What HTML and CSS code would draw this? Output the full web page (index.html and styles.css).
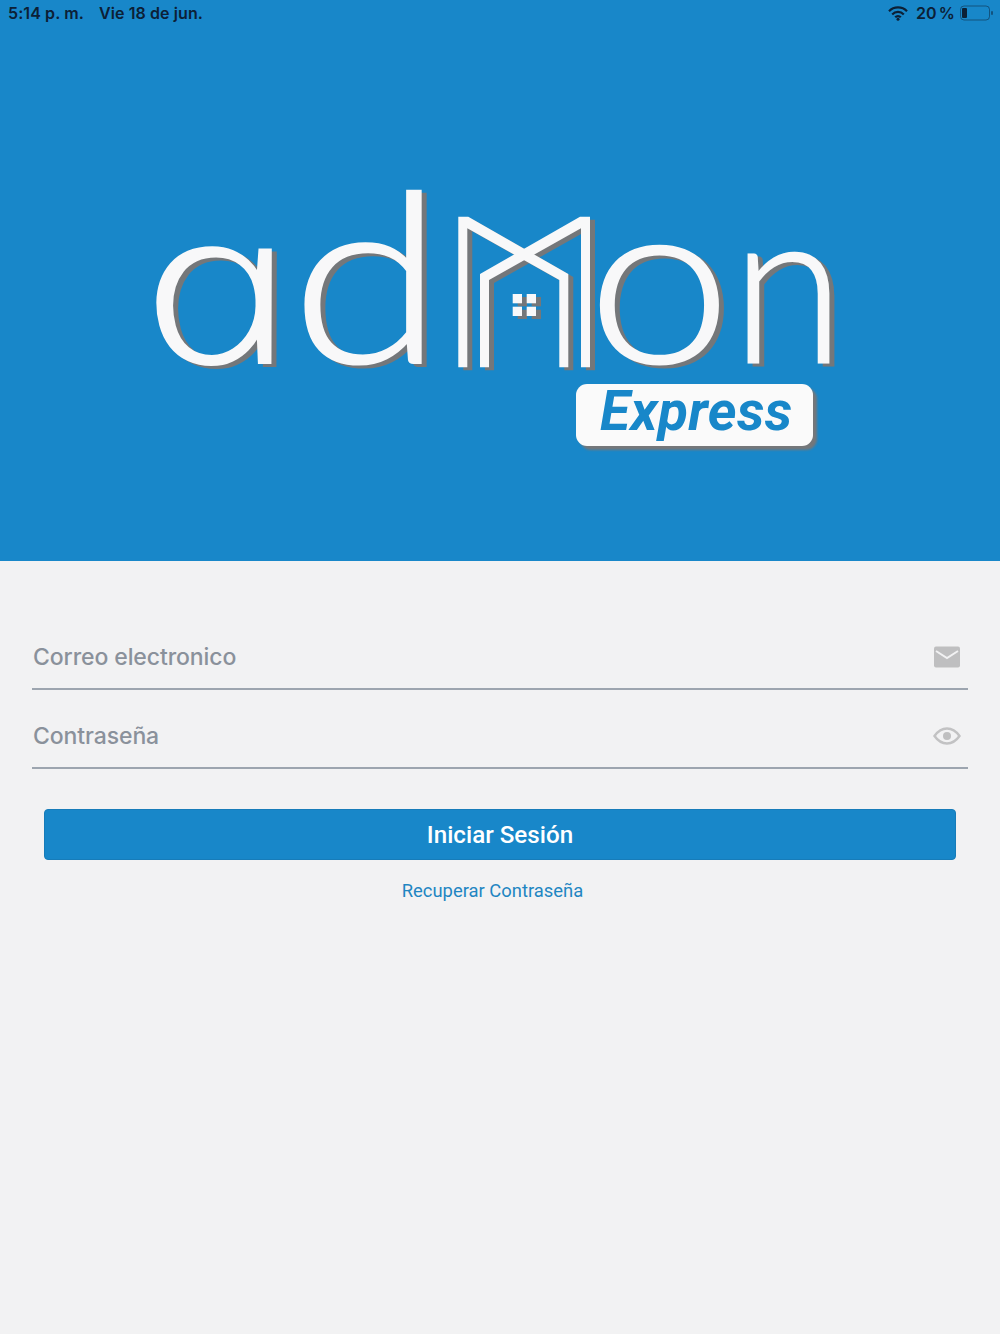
FILE: index.html
```html
<!DOCTYPE html>
<html lang="es">
<head>
  <meta charset="UTF-8">
  <meta name="viewport" content="width=device-width, initial-scale=1.0">
  <title>Admon Express</title>
  <link rel="stylesheet" href="styles.css">
</head>
<body>
  <header class="hero">
    <div class="status">
      <div class="status-left">
        <span>5:14 p. m.</span>
        <span>Vie 18 de jun.</span>
      </div>
      <div class="status-right">
        <svg class="wifi" width="20" height="15" viewBox="0 0 20 15">
          <path d="M1 5.2a12.6 12.6 0 0 1 18 0" />
          <path d="M4.2 8.4a8 8 0 0 1 11.6 0" />
          <path d="M7.2 11.3a3.8 3.8 0 0 1 5.6 0" />
          <circle cx="10" cy="13.2" r="1.5" />
        </svg>
        <span class="battery-text">20 %</span>
        <svg class="battery" width="34" height="16" viewBox="0 0 34 16">
          <rect class="battery-case" x="0.5" y="1" width="29" height="14" rx="3.5" />
          <rect class="battery-level" x="2" y="3" width="5" height="10" rx="1" />
          <rect class="battery-nub" x="31" y="6" width="2" height="4" rx="1" />
        </svg>
      </div>
    </div>

    <svg class="logo" width="1000" height="535" viewBox="0 26 1000 535" role="img" aria-label="admon Express">
      <g class="logo-mark">
        <text class="logo-letter logo-a" transform="translate(157 363) skewX(15) scale(1.28 1)">a</text>
        <text class="logo-letter" transform="translate(291 363) scale(1.19 1.02)">d</text>
        <polygon points="458.3,216.7 468.3,216.7 568.3,274 568.3,367.3 559.3,367.3 559.3,280 467.3,228.3 467.3,367.3 458.3,367.3" />
        <polygon points="580,216.7 590,216.7 590,367.3 581,367.3 581,228.3 489,280 489,367.3 480,367.3 480,274" />
        <rect x="512.7" y="294" width="9.3" height="9.3" />
        <rect x="526.7" y="294" width="9.3" height="9.3" />
        <rect x="512.7" y="306.7" width="9.3" height="9.3" />
        <rect x="526.7" y="306.7" width="9.3" height="9.3" />
        <text class="logo-letter" transform="translate(587.6 363) scale(1.11 1)">o</text>
        <text class="logo-letter" transform="translate(731.7 363) scale(0.88 0.935)">n</text>
      </g>
      <rect class="pill-shadow" x="580" y="388" width="237" height="62" rx="11" />
      <rect class="pill" x="576" y="384" width="237" height="62" rx="11" />
      <text class="pill-text" x="600" y="430">Express</text>
    </svg>
  </header>

  <main class="login">
    <div class="field">
      <span class="placeholder">Correo electronico</span>
      <svg class="field-icon" width="28" height="22" viewBox="0 0 28 22">
        <rect class="icon-fill" x="1" y="0.5" width="26" height="21" rx="2" />
        <path class="icon-cut" d="M3 5l11 7 11-7" />
      </svg>
    </div>
    <div class="field">
      <span class="placeholder">Contraseña</span>
      <svg class="field-icon" width="28" height="22" viewBox="0 0 28 22">
        <path class="icon-line" d="M1.5 11C5 6 9 3.5 14 3.5S23 6 26.500 11C23 16 19 18.500 14 18.500S5 16 1.500 11Z" />
        <circle class="icon-fill" cx="14" cy="11" r="4" />
      </svg>
    </div>
    <button class="submit" type="button">Iniciar Sesión</button>
    <a class="recover" href="#">Recuperar Contraseña</a>
  </main>
</body>
</html>
```

FILE: styles.css
```css
* {
  box-sizing: border-box;
}
body {
  margin: 0;
  height: 1334px;
  overflow: hidden;
  background: #f2f2f3;
  font-family: Inter, "Liberation Sans", sans-serif;
}
.hero {
  height: 561px;
  background: #1887c9;
}
.status {
  height: 26px;
  padding: 0 6px 0 8px;
  display: flex;
  justify-content: space-between;
  align-items: center;
  color: #0c2036;
  font-size: 16px;
  font-weight: 600;
  letter-spacing: 0.1px;
}
.status-left {
  display: flex;
  gap: 15px;
}
.status-right {
  display: flex;
  align-items: center;
  gap: 5px;
}
.battery-text {
  word-spacing: -2px;
}
.wifi {
  margin-right: 3px;
}
.wifi path {
  fill: none;
  stroke: #0c2036;
  stroke-width: 2.2;
}
.wifi circle {
  fill: #0c2036;
}
.battery-case {
  fill: none;
  stroke: #0c2036;
  stroke-opacity: 0.5;
}
.battery-level {
  fill: #0c2036;
}
.battery-nub {
  fill: #0c2036;
  opacity: 0.5;
}
.logo {
  display: block;
}
.logo-mark {
  fill: #f8f8f9;
  filter: drop-shadow(5px 3px 0 #74777a);
}
.logo-letter {
  font-family: Lato, sans-serif;
  font-weight: 300;
  font-size: 232px;
  stroke: #f8f8f9;
  stroke-width: 2px;
}
.logo-a {
  font-family: "Open Sans", sans-serif;
  font-style: italic;
  font-size: 214px;
}
.pill {
  fill: #fafafa;
}
.pill-shadow {
  fill: #74777a;
  filter: blur(1px);
}
.pill-text {
  font-family: Roboto, sans-serif;
  font-size: 55px;
  font-style: italic;
  font-weight: 700;
  letter-spacing: 0.4px;
  fill: #1887c9;
}
.login {
  padding: 50.5px 32px 0;
}
.field {
  height: 78.5px;
  padding-top: 15px;
  display: flex;
  justify-content: space-between;
  align-items: center;
  border-bottom: 2px solid #9da5af;
}
.placeholder {
  padding-left: 1px;
  color: #8a919b;
  font-size: 23px;
  font-weight: 500;
  letter-spacing: -0.1px;
}
.field-icon {
  margin-right: 7px;
}
.icon-fill {
  fill: #bfbfc0;
}
.icon-cut {
  fill: none;
  stroke: #f2f2f3;
  stroke-width: 2;
}
.icon-line {
  fill: none;
  stroke: #c2c2c3;
  stroke-width: 2.4;
}
.submit {
  display: block;
  width: 912px;
  height: 51px;
  margin: 40.5px 0 0 12px;
  border: 1px solid #177cb9;
  border-radius: 4px;
  background: #1887c9;
  color: #fff;
  font-family: Roboto, sans-serif;
  font-size: 24.2px;
  font-weight: 500;
}
.recover {
  display: block;
  margin-top: 20px;
  padding-right: 15px;
  text-align: center;
  color: #1f86c2;
  font-family: Roboto, sans-serif;
  font-size: 18.4px;
  text-decoration: none;
}
```
